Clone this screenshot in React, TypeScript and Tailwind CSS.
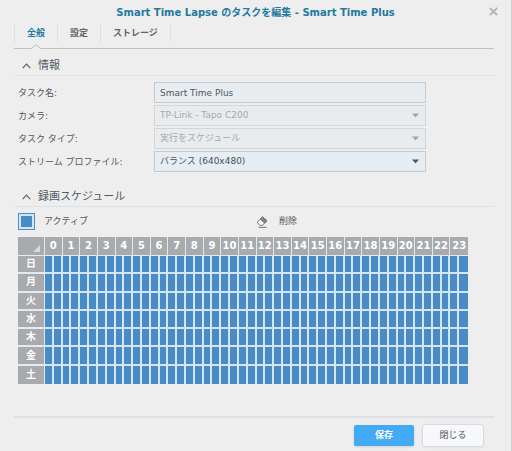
import { useState, type ReactNode } from "react";

const tabs = ["全般", "設定", "ストレージ"];
const days = ["日", "月", "火", "水", "木", "金", "土"];
const hours = Array.from({ length: 24 }, (_, i) => i);
const slots = Array.from({ length: 48 }, (_, i) => i);

function Chevron() {
  return (
    <svg width="9" height="6" viewBox="0 0 9 6" fill="none" stroke="#5c646c" strokeWidth="1.2">
      <path d="M0.7 5.2 4.5 1.1 8.3 5.2" />
    </svg>
  );
}

function SectionTitle({ children }: { children: ReactNode }) {
  return (
    <h2 className="border-b border-[#dfe1e2] text-[11px] font-normal text-[#505a64]">
      <button type="button" className="flex h-5 items-center gap-[7px] pt-0.5 pl-2">
        <Chevron />
        {children}
      </button>
    </h2>
  );
}

function Field({ id, label, children }: { id: string; label: string; children: ReactNode }) {
  return (
    <div className="flex h-[21px] items-center">
      <label htmlFor={id} className="w-34 shrink-0 leading-5">
        {label}
      </label>
      {children}
    </div>
  );
}

function SelectField({
  id,
  label,
  value,
  disabled,
}: {
  id: string;
  label: string;
  value: string;
  disabled?: boolean;
}) {
  return (
    <Field id={id} label={label}>
      <div className="relative h-full w-68">
        <select
          id={id}
          disabled={disabled}
          className="block h-full w-full appearance-none border border-[#c6cacd] bg-[#e6edf3] pr-5 pl-[5px] text-[#4b5157] opacity-100 disabled:border-[#d3d6d8] disabled:bg-[#e8ecee] disabled:text-[#a4a9ad]"
        >
          <option>{value}</option>
        </select>
        <svg
          className={`pointer-events-none absolute top-2 right-[7px] ${disabled ? "text-[#a0a4a7]" : "text-[#505a63]"}`}
          width="7"
          height="5"
          viewBox="0 0 7 5"
          fill="currentColor"
        >
          <path d="M0 0.5h7L3.5 4.5z" />
        </svg>
      </div>
    </Field>
  );
}

export default function App() {
  const [activeTab, setActiveTab] = useState(0);
  const [name, setName] = useState("Smart Time Plus");

  return (
    <div className="relative min-h-screen border-r border-[#cfd1d2] bg-[#eeeeee] px-[14px] pb-[5px] font-['DejaVu_Sans','Noto_Sans_CJK_JP',sans-serif] text-[9px] text-[#50565c]">
      <h1 className="flex h-6 items-center justify-center text-[10px] font-bold whitespace-nowrap text-[#23799f]">
        Smart Time Lapse のタスクを編集 - Smart Time Plus
      </h1>
      <button type="button" aria-label="閉じる" className="absolute top-[7px] right-[13px]">
        <svg width="9" height="9" viewBox="0 0 9 9" stroke="#b0b4b7" strokeWidth="1.8">
          <path d="M0.8 0.8 8.2 8.2M8.2 0.8 0.8 8.2" />
        </svg>
      </button>

      <nav className="mr-[3px] flex h-[25px] border-b border-[#bdc2bf]">
        {tabs.map((tab, i) => (
          <button
            key={tab}
            type="button"
            onClick={() => setActiveTab(i)}
            className={`relative h-[18px] border-r border-[#dedfe0] px-3 leading-[18px] font-bold first:border-l ${
              i === activeTab ? "text-[#23799f]" : "text-[#5d656c]"
            }`}
          >
            {tab}
            {i === activeTab && (
              <svg
                className="absolute top-5 left-1/2 -translate-x-1/2"
                width="10"
                height="5"
                viewBox="0 0 10 5"
              >
                <path d="M0 5 5 0.6 10 5z" fill="#eeeeee" />
                <path d="M0 4.8 5 0.6 10 4.8" fill="none" stroke="#bdc2bf" />
              </svg>
            )}
          </button>
        ))}
      </nav>

      <section className="mt-[6px] mr-[3px]">
        <SectionTitle>情報</SectionTitle>
        <div className="mt-[6px] flex flex-col gap-[2px] pl-1">
          <Field id="task-name" label="タスク名:">
            <input
              id="task-name"
              value={name}
              onChange={(e) => setName(e.target.value)}
              className="h-full w-68 border border-[#c6cacd] bg-[#e8edf1] px-[5px]"
            />
          </Field>
          <SelectField id="camera" label="カメラ:" value="TP-Link - Tapo C200" disabled />
          <SelectField id="task-type" label="タスク タイプ:" value="実行をスケジュール" disabled />
          <SelectField id="profile" label="ストリーム プロファイル:" value="バランス (640x480)" />
        </div>
      </section>

      <section className="mt-[14px] mr-[3px]">
        <SectionTitle>録画スケジュール</SectionTitle>
        <div className="mt-[6px] grid grid-cols-2 pl-1">
          <button type="button" className="flex h-[17px] items-center gap-[9px]">
            <span className="flex size-[17px] items-center justify-center border border-[#4a8fc6] bg-[#d3e6f3]">
              <span className="size-[11px] bg-[#488bc5]" />
            </span>
            アクティブ
          </button>
          <button type="button" className="flex h-[17px] items-center gap-[11px]">
            <svg width="12" height="12" viewBox="0 0 12 12" fill="none" stroke="#6f7579">
              <path d="M6.8 0.9 11 4.8 6.2 9.4H4.1L1 6.4z" fill="#f7f7f7" />
              <path d="M6.8 0.9 11 4.8 8.6 7.1 4.4 3.2z" fill="#81868a" />
              <path d="M2.5 11.3h8" />
            </svg>
            削除
          </button>
        </div>

        <table className="mt-[7px] ml-1 h-[147px] w-[450px] table-fixed border-separate border-spacing-0 text-center text-[10px] leading-3 font-bold text-white">
          <colgroup>
            <col className="w-[27px]" />
            {slots.map((slot) => (
              <col key={slot} />
            ))}
          </colgroup>
          <thead>
            <tr className="h-[19px]">
              <th className="border-r border-b border-[#e4ebef] bg-[#a8aaad] p-0">
                <svg className="mt-1 mr-1 ml-auto" width="7" height="7" viewBox="0 0 7 7">
                  <path d="M7 0v7H0z" fill="#d7d8da" />
                </svg>
              </th>
              {hours.map((hour) => (
                <th
                  key={hour}
                  colSpan={2}
                  className="border-r border-b border-[#e4ebef] bg-[#a8aaad] p-0 last:border-r-0"
                >
                  {hour}
                </th>
              ))}
            </tr>
          </thead>
          <tbody>
            {days.map((day) => (
              <tr key={day} className="group h-[18px]">
                <th className="border-r border-b-2 border-[#e4ebef] bg-[#a8aaad] p-0 group-last:border-b-0">
                  {day}
                </th>
                {slots.map((slot) => (
                  <td
                    key={slot}
                    className="border-r-2 border-b-2 border-[#d3e6f3] bg-[#488bc5] p-0 group-last:border-b-0 last:border-r-0"
                  />
                ))}
              </tr>
            ))}
          </tbody>
        </table>
      </section>

      <footer className="mt-8 mr-[3px] flex justify-end gap-[9px] border-t-2 border-[#dfe0e1] pt-[7px] pr-[11px]">
        <button type="button" className="h-[21px] w-15 rounded-xs bg-[#43aaf8] font-bold text-white shadow-sm">
          保存
        </button>
        <button type="button" className="h-[21px] w-15 rounded-xs bg-[#f7f8fb] shadow-sm ring-1 ring-[#d9dcdf]">
          閉じる
        </button>
      </footer>
    </div>
  );
}
